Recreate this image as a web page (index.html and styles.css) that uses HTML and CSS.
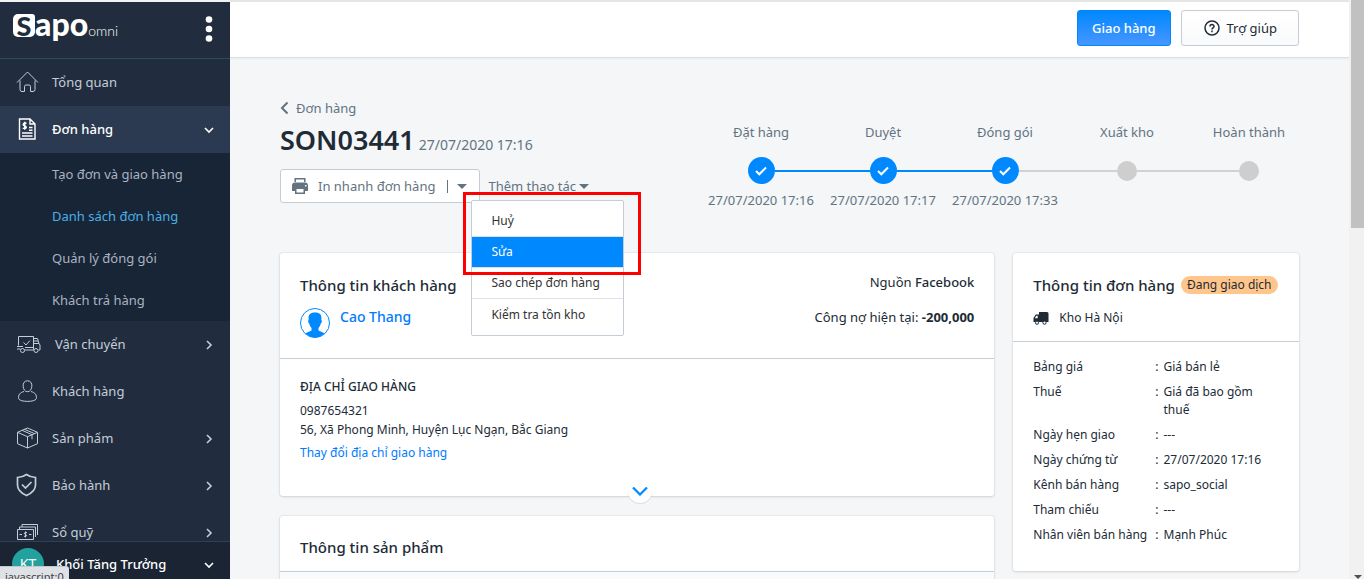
FILE: index.html
```html
<!DOCTYPE html>
<html lang="vi">
<head>
<meta charset="utf-8">
<meta name="viewport" content="width=device-width, initial-scale=1">
<title>SON03441 - Đơn hàng</title>
<link rel="stylesheet" href="styles.css">
</head>
<body>
<div class="app">
  <aside class="sidebar">
    <div class="brand">
      <a class="logo" href="#"><span class="logo-tile">S</span><span class="logo-name">apo</span><span class="logo-sub">omni</span></a>
      <button class="kebab" aria-label="Menu"><svg width="8" height="28" viewBox="0 0 8 28" fill="#fff"><circle cx="4" cy="4.500" r="3.300"/><circle cx="4" cy="14" r="3.300"/><circle cx="4" cy="23.500" r="3.300"/></svg></button>
    </div>
    <nav class="nav">
      <a class="nav-item" href="#">
        <svg class="nav-icon" viewBox="0 0 24 24"><path d="M2 12.500 12.500 2 23 12.500M5 10.500v9q0 2 2 2h2.500v-5q0-1.500 1.500-1.500h3q1.500 0 1.500 1.500v5H18q2 0 2-2v-9"/></svg>
        <span class="nav-label">Tổng quan</span>
      </a>
      <a class="nav-item active" href="#">
        <svg class="nav-icon" viewBox="0 0 24 24"><path stroke-width="1.400" d="M4.500 2h10.500l5 5v15h-15.500zM15 2v5h5M7 16h10.500M7 19h10.500M14 10.500h3.500M14 13.200h3.500M11.500 6.500c-3-1.500-4.500 1.500-2 2.300 3 .8 2 3.700-1.800 2.400M9.700 4.800v8"/></svg>
        <span class="nav-label">Đơn hàng</span>
        <svg class="chev" viewBox="0 0 12 12"><path d="m2 4 4 4 4-4"/></svg>
      </a>
      <div class="subnav">
        <a href="#">Tạo đơn và giao hàng</a>
        <a class="current" href="#">Danh sách đơn hàng</a>
        <a href="#">Quản lý đóng gói</a>
        <a href="#">Khách trả hàng</a>
      </div>
      <a class="nav-item" href="#">
        <svg class="nav-icon wide" viewBox="0 0 27 24"><path d="M3.500 13.500V4.500h15V17.500M18.500 6.500h4l1.500 5 1 1.500v5h-1.500M19 9h4M19 11.500h5M2 14.500h6M2 17h3.500M9.500 18h9.500M8.500 10.500l2.500 2.500 4-4.500M10 15.500h8"/><circle cx="7.500" cy="18.500" r="2"/><circle cx="21" cy="18.500" r="2"/></svg>
        <span class="nav-label">Vận chuyển</span>
        <svg class="chev" viewBox="0 0 12 12"><path d="m4 2 4 4-4 4"/></svg>
      </a>
      <a class="nav-item" href="#">
        <svg class="nav-icon" viewBox="0 0 24 24"><path d="M12.500 1.800c-3.200 0-4.700 2.500-4.300 5.700.3 2.700 1.500 5.200 4.300 5.200s4-2.500 4.300-5.200c.4-3.200-1.100-5.700-4.300-5.700zM9 12.500c-4 1-6 3.500-5.300 7.200 1 3.600 16.600 3.600 17.600 0 .7-3.700-1.300-6.200-5.300-7.200"/></svg>
        <span class="nav-label">Khách hàng</span>
      </a>
      <a class="nav-item" href="#">
        <svg class="nav-icon" viewBox="0 0 24 24"><path d="m12.500 2 10 4.300v11.400L12.500 22l-10-4.300V6.300zM2.500 6.300l10 4.400 10-4.400M12.500 10.700V22M7 4.300l10 4.400v4.500M9.500 3.300l10 4.300"/></svg>
        <span class="nav-label">Sản phẩm</span>
        <svg class="chev" viewBox="0 0 12 12"><path d="m4 2 4 4-4 4"/></svg>
      </a>
      <a class="nav-item" href="#">
        <svg class="nav-icon" viewBox="0 0 24 24"><path stroke-width="1.700" d="M11.500 1.500c2.500 1.800 5.500 2.700 9 3v7.500c0 5-4 8.300-9 10.500-5-2.200-9-5.500-9-10.500V4.500c3.500-.3 6.500-1.200 9-3zM7 11.500l3.500 3.500 6-6"/></svg>
        <span class="nav-label">Bảo hành</span>
        <svg class="chev" viewBox="0 0 12 12"><path d="m4 2 4 4-4 4"/></svg>
      </a>
      <a class="nav-item" href="#">
        <svg class="nav-icon" viewBox="0 0 24 24"><path d="M2.500 9.500h16v10h-16zM4.500 9.500V7h16v10M7 7V4.500h15.500V15M4.500 14.500h2.500M14 14.500h2.500M12 12.700c-3-1-3.300 1.300-1.500 1.800s1.500 2.600-1.500 1.700M10.500 11.500v6"/></svg>
        <span class="nav-label">Sổ quỹ</span>
        <svg class="chev" viewBox="0 0 12 12"><path d="m4 2 4 4-4 4"/></svg>
      </a>
    </nav>
    <button class="account">
      <span class="avatar">KT</span>
      <span class="account-name">Khối Tăng Trưởng</span>
      <svg class="chev" viewBox="0 0 12 12"><path d="m2 4 4 4 4-4"/></svg>
    </button>
  </aside>

  <main class="main">
    <header class="topbar">
      <button class="btn btn-primary">Giao hàng</button>
      <button class="btn btn-help"><svg width="16" height="16" viewBox="0 0 16 16" fill="none" stroke="#212b36" stroke-width="1.500"><circle cx="8" cy="8" r="7"/><path d="M6 6.500C6 4 10 4 10 6.400 10 7.800 8 7.800 8 9.400M8 10.600v1.600"/></svg>Trợ giúp</button>
    </header>

    <div class="content">
      <section class="order-head">
        <div class="order-id">
          <a class="back" href="#"><svg width="9" height="14" viewBox="0 0 9 14" fill="none" stroke="#637381" stroke-width="2"><path d="M7.500 1.500 2 7l5.500 5.500"/></svg>Đơn hàng</a>
          <div class="title-row"><h1>SON03441</h1><span class="order-date">27/07/2020 17:16</span></div>
          <div class="actions">
            <button class="btn-print">
              <svg width="18" height="18" viewBox="0 0 18 18"><path fill="#637381" fill-rule="evenodd" d="M3.500 1h11v4h-11zM5 2.500V5h8V2.500zM1 8.500Q1 5.500 4 5.500h10q3 0 3 3V14h-3v3H4v-3H1zM5.500 12v3.500h7V12zM14 8h1.500v1.500H14z"/></svg>
              <span>In nhanh đơn hàng</span><span class="bar"></span><span class="caret"></span>
            </button>
            <div class="dropdown">
              <button class="more">Thêm thao tác<span class="caret"></span></button>
              <div class="menu" role="menu">
                <button role="menuitem">Huỷ</button>
                <button role="menuitem" class="selected">Sửa</button>
                <button role="menuitem">Sao chép đơn hàng</button>
                <button role="menuitem">Kiểm tra tồn kho</button>
              </div>
              <div class="highlight"></div>
            </div>
          </div>
        </div>
        <ol class="steps">
          <li class="done"><span>Đặt hàng</span><div class="track"><i><svg viewBox="0 0 12 10"><path d="m1 5 3.300 3.300L11 1.500"/></svg></i></div><time>27/07/2020 17:16</time></li>
          <li class="done"><span>Duyệt</span><div class="track"><i><svg viewBox="0 0 12 10"><path d="m1 5 3.300 3.300L11 1.500"/></svg></i></div><time>27/07/2020 17:17</time></li>
          <li class="done last-done"><span>Đóng gói</span><div class="track"><i><svg viewBox="0 0 12 10"><path d="m1 5 3.300 3.300L11 1.500"/></svg></i></div><time>27/07/2020 17:33</time></li>
          <li><span>Xuất kho</span><div class="track"><i></i></div></li>
          <li><span>Hoàn thành</span><div class="track"><i></i></div></li>
        </ol>
      </section>

      <div class="columns">
        <div class="column">
          <section class="card customer">
            <div class="card-head customer-head">
              <div>
                <h2>Thông tin khách hàng</h2>
                <div class="person">
                  <svg width="30" height="30" viewBox="0 0 30 30"><circle cx="15" cy="15" r="14.500" fill="#fff" stroke="#08f"/><path fill="#08f" d="M15 4.500c5 0 7 2.500 6.300 7l.5 1.500c.2 1.500-.5 2-1 2.500-.5 2-1.500 3.500-2.300 4.500v2.500l6 2.700C22 28 18.500 29.500 15 29.500S8 28 5.500 25.200l6-2.700V20c-.8-1-1.800-2.500-2.300-4.500-.5-.5-1.200-1-1-2.500l.5-1.500c-.7-4.500 1.300-7 6.300-7z"/></svg>
                  <a href="#">Cao Thang</a>
                </div>
              </div>
              <div class="customer-meta">
                <p>Nguồn <strong class="semi">Facebook</strong></p>
                <p>Công nợ hiện tại: <strong>-200,000</strong></p>
              </div>
            </div>
            <div class="address">
              <h3>ĐỊA CHỈ GIAO HÀNG</h3>
              <p>0987654321</p>
              <p>56, Xã Phong Minh, Huyện Lục Ngạn, Bắc Giang</p>
              <a href="#">Thay đổi địa chỉ giao hàng</a>
            </div>
            <button class="expand" aria-label="Mở rộng"><svg width="16" height="10" viewBox="0 0 16 10" fill="none" stroke="#08f" stroke-width="2.200"><path d="m1 1.500 7 7 7-7"/></svg></button>
          </section>
          <section class="card products">
            <div class="products-head"><h2>Thông tin sản phẩm</h2></div>
            <div class="products-list"></div>
          </section>
        </div>

        <section class="card order-info">
          <div class="card-head">
            <div class="status"><h2>Thông tin đơn hàng</h2><span class="badge">Đang giao dịch</span></div>
            <div class="store"><svg width="16" height="13" viewBox="0 0 16 13"><path fill="#212b36" fill-rule="evenodd" d="M6 0H14q1.500 0 1.500 1.500V10H.5V6l2.200-3.500H6zM1.800 6.200h2.900V3.800H3.200z"/><g fill="#fff" stroke="#212b36"><circle cx="4" cy="10.700" r="1.600"/><circle cx="11.500" cy="10.700" r="1.600"/></g></svg>Kho Hà Nội</div>
          </div>
          <dl class="facts">
            <dt>Bảng giá</dt><dd>Giá bán lẻ</dd>
            <dt>Thuế</dt><dd>Giá đã bao gồm thuế</dd>
            <dt>Ngày hẹn giao</dt><dd>---</dd>
            <dt>Ngày chứng từ</dt><dd>27/07/2020 17:16</dd>
            <dt>Kênh bán hàng</dt><dd>sapo_social</dd>
            <dt>Tham chiếu</dt><dd>---</dd>
            <dt>Nhân viên bán hàng</dt><dd>Mạnh Phúc</dd>
          </dl>
        </section>
      </div>
    </div>
  </main>

  <div class="scrollbar"><div class="thumb"></div><svg width="8" height="4" viewBox="0 0 8 4"><path fill="#505050" d="M0 0h8L4 4z"/></svg></div>
  <div class="link-status">javascript:0</div>
</div>
</body>
</html>
```
FILE: styles.css
```css
* { box-sizing: border-box; }

body {
  margin: 0;
  background: #f4f6f8;
  color: #212b36;
  font: 13px/18px "Noto Sans", "Open Sans", sans-serif;
}

h1, h2, h3, p, ol, dl, dd { margin: 0; padding: 0; }
a { color: #007bff; text-decoration: none; }
button { font: inherit; color: inherit; background: none; border: 0; padding: 0; cursor: pointer; }

.app { position: relative; display: flex; height: 100vh; overflow: hidden; }

/* Sidebar */
.sidebar {
  display: flex;
  flex-direction: column;
  flex: none;
  width: 230px;
  border-top: 2px solid #f1f1f1;
  background: #212d3e;
}
.brand {
  display: flex;
  flex: none;
  justify-content: space-between;
  align-items: center;
  height: 57px;
  padding: 0 17px 4px 13px;
  border-bottom: 1px solid #2a4a62;
}
.logo { display: flex; align-items: baseline; padding-bottom: 2px; color: #fff; font-family: Lato, sans-serif; line-height: 24px; }
.logo-tile {
  width: 22px;
  height: 23px;
  border-radius: 5px 3px 5px 5px;
  background: #fff;
  color: #212d3e;
  font-size: 27px;
  font-weight: 900;
  line-height: 23px;
  text-align: center;
}
.logo-name { font-size: 32px; font-weight: 900; }
.logo-sub { font-size: 14px; font-weight: 300; }
.kebab { display: flex; padding-top: 1px; }
.nav { flex: 1; min-height: 0; overflow: hidden; }
.nav-item {
  display: flex;
  align-items: center;
  gap: 13px;
  height: 47px;
  padding: 0 15px 2px;
  color: #c4cdd8;
}
.nav-item.active { background: #2b3a51; color: #fff; font-weight: 500; }
.nav-icon { flex: none; width: 24px; height: 24px; fill: none; stroke: currentColor; stroke-width: 1; }
.nav-icon.wide { width: 27px; }
.nav-label { flex: 1; }
.chev { flex: none; width: 12px; height: 12px; margin-top: 2px; fill: none; stroke: currentColor; stroke-width: 1.600; }
.subnav { background: #182536; }
.subnav a { display: block; padding: 0 52px; color: #aab3c2; line-height: 42px; white-space: nowrap; }
.subnav .current { color: #4bafe6; }
.account {
  display: flex;
  flex: none;
  align-items: center;
  gap: 12px;
  height: 38px;
  padding: 7px 15px 0 12px;
  border-top: 1px solid #2c405a;
  background: #1a2433;
  color: #fff;
  font-weight: 500;
  text-align: left;
}
.avatar {
  width: 32px;
  height: 32px;
  border-radius: 50%;
  background: #23a19e;
  font-size: 14px;
  font-weight: 400;
  line-height: 32px;
  text-align: center;
}
.account-name { flex: 1; white-space: nowrap; }

/* Top bar */
.main { flex: 1; min-width: 0; }
.topbar {
  display: flex;
  justify-content: flex-end;
  gap: 10px;
  padding: 8px 50px 11px;
  border-top: 2px solid #e5e5e5;
  border-bottom: 1px solid #dcdfe2;
  background: #fff;
  box-shadow: 0 1px 2px #0000000d;
}
.btn { height: 36px; border: 1px solid #c4cdd5; border-radius: 3px; font-size: 13px; }
.btn-primary { padding: 0 14px; border-color: #08f; background: linear-gradient(#08f, #4796ff); color: #fff; font-weight: 500; }
.btn-help { display: flex; align-items: center; gap: 7px; padding: 0 21px 0 22px; background: linear-gradient(#fff, #f9fafb); }

/* Order header */
.content { padding: 40px 50px 0; }
.order-head { display: flex; justify-content: space-between; color: #637381; }
.order-id { padding-bottom: 50px; }
.back { display: flex; align-items: center; gap: 7px; color: #637381; line-height: 20px; }
.title-row { display: flex; align-items: baseline; gap: 4px; margin-top: 4px; line-height: 36px; }
h1 { color: #212b36; font-size: 27px; font-weight: 600; line-height: 36px; }
.order-date { font-size: 14px; }
.actions { display: flex; align-items: center; margin-top: 6px; }
.btn-print {
  display: flex;
  align-items: center;
  gap: 9px;
  height: 34px;
  padding: 0 12px 0 10px;
  border: 1px solid #c4cdd5;
  border-radius: 3px;
  background: #fff;
}
.bar { width: 1px; height: 13px; margin-left: 3px; background: #637381; }
.caret { border: 5px solid transparent; border-top-color: #637381; border-bottom: 0; }
.dropdown { position: relative; }
.more { display: flex; align-items: center; gap: 3px; padding: 0 8px; }
.menu {
  position: absolute;
  z-index: 2;
  top: 23px;
  left: -9px;
  width: 153px;
  padding: 5px 0;
  border: 1px solid #c4cdd5;
  border-radius: 2px;
  background: #fff;
  color: #333;
}
.menu button {
  display: block;
  width: 100%;
  height: 31px;
  padding: 0 19px;
  border-bottom: 1px solid #dfe3e8;
  font-size: 12px;
  text-align: left;
  white-space: nowrap;
}
.menu button:last-child { border-bottom: 0; }
.menu .selected { background: #08f; color: #fff; }
.highlight {
  position: absolute;
  z-index: 3;
  top: 15px;
  left: -17px;
  width: 178px;
  height: 83px;
  border: 3px solid #f00;
}

/* Progress steps */
.steps { display: flex; margin: 25px -11px 0 0; list-style: none; text-align: center; }
.steps li { flex: none; width: 122px; }
.steps time { display: block; font-size: 13px; margin-top: 7px; }
.track { display: flex; align-items: center; height: 27px; margin-top: 16px; }
.track::before, .track::after { content: ""; flex: 1; height: 2px; background: #d0d3d6; }
.track i { display: flex; align-items: center; justify-content: center; width: 20px; height: 20px; border-radius: 50%; background: #cecece; }
.done .track i { width: 27px; height: 27px; background: #08f; }
.done .track::before, .done .track::after { background: #08f; }
.last-done .track::after { background: #d0d3d6; }
.steps li:first-child .track::before, .steps li:last-child .track::after { background: none; }
.track svg { width: 12px; height: 10px; fill: none; stroke: #fff; stroke-width: 2; }

/* Cards */
.columns { display: grid; grid-template-columns: 5fr 2fr; gap: 19px; align-items: start; }
.column { display: grid; gap: 20px; }
.card { position: relative; border-radius: 3px; background: #fff; box-shadow: 0 0 0 1px #3f3f440d, 0 1px 3px #3f3f4426; }
.card-head { padding: 20px 20px 14px; border-bottom: 1px solid #c4cdd5; }
h2 { font-size: 15px; font-weight: 500; line-height: 24px; }
.customer-head { display: flex; justify-content: space-between; padding-bottom: 20px; }
.person { display: flex; align-items: flex-start; gap: 10px; margin-top: 11px; font-size: 14px; font-weight: 500; }
.customer-meta { display: grid; align-content: start; gap: 17px; text-align: right; }
.semi { font-weight: 500; }
.address { padding: 19px 20px 34px; font-size: 12px; line-height: 19px; }
h3 { margin-bottom: 5px; font-size: 12px; font-weight: 500; line-height: 18px; }
.address a { display: block; margin-top: 4px; }
.expand {
  position: absolute;
  bottom: -7px;
  left: calc(50% - 9px);
  display: grid;
  place-items: center;
  width: 24px;
  height: 24px;
  border-radius: 50%;
  background: #fff;
  box-shadow: 0 1px 1px #3f3f4426;
}
.products-head { padding: 19px 20px 12px; border-bottom: 1px solid #c4cdd5; }
.products-list { height: 60px; background: #f9fafb; }
.status { display: flex; align-items: center; gap: 6px; white-space: nowrap; }
.badge { padding: 0 6px; border-radius: 9px; background: #ffc58b; font-size: 12px; line-height: 18px; }
.store { display: flex; align-items: center; gap: 10px; margin-top: 12px; font-size: 12px; }
.facts { display: grid; grid-template-columns: 122px 1fr; row-gap: 7px; padding: 16px 20px 27px; font-size: 12px; }
.facts dt { white-space: nowrap; }
.facts dd { display: flex; gap: 5px; }
.facts dd::before { content: ":"; }

/* Window edge */
.scrollbar {
  display: flex;
  flex: none;
  flex-direction: column;
  align-items: center;
  justify-content: space-between;
  width: 15px;
  padding-left: 2px;
  background: #f1f1f1;
}
.thumb { width: 100%; height: 39.400%; background: #c1c1c1; }
.link-status {
  position: absolute;
  bottom: 0;
  left: 0;
  height: 13px;
  padding: 2px 5px 0;
  border-top: 1px solid #c4c7cc;
  border-radius: 0 3px 0 0;
  background: #dee1e6;
  color: #3c4043;
  font-size: 11px;
  line-height: 16px;
  overflow: hidden;
}
```
